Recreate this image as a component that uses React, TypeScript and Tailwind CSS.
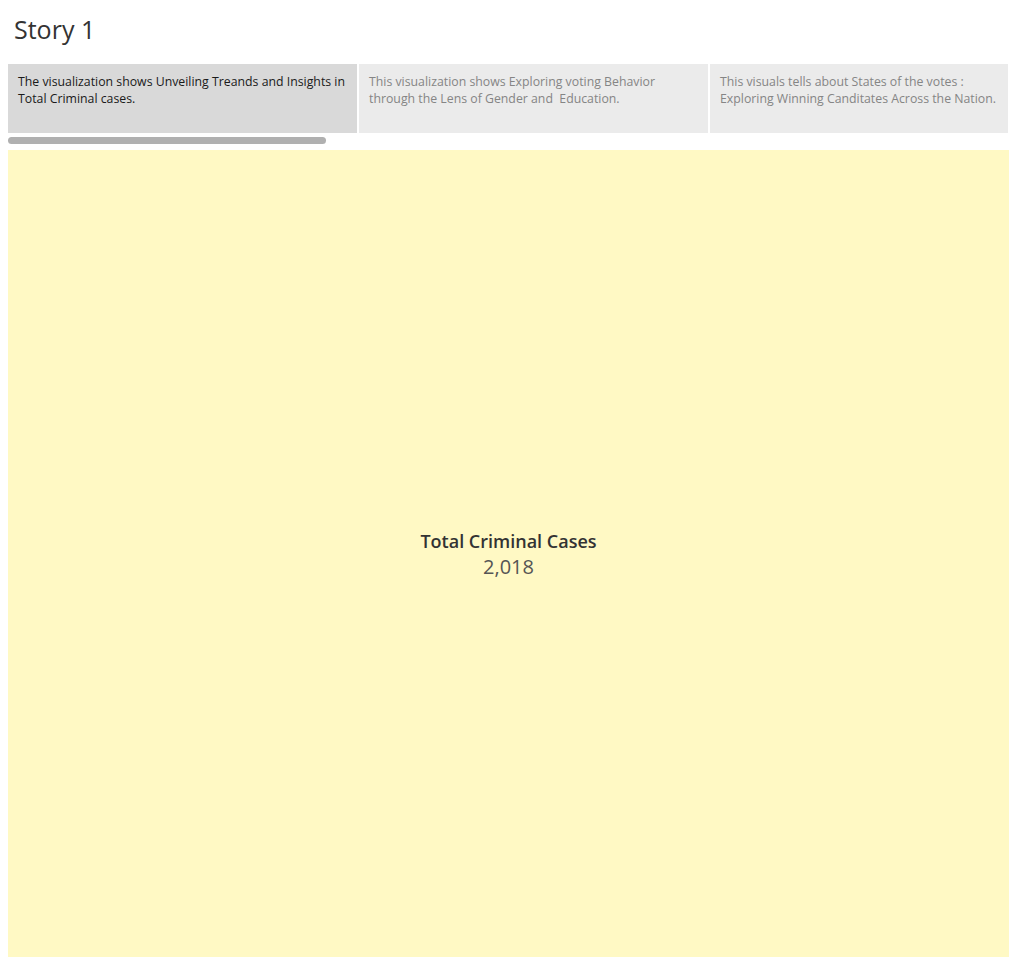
const TABS = [
  {
    text: 'The visualization shows Unveiling Treands and Insights in Total Criminal cases.',
    active: true,
  },
  {
    text: 'This visualization shows Exploring voting Behavior through the Lens of Gender and\u00a0 Education.',
    active: false,
  },
  {
    text: 'This visuals tells about States of the votes : Exploring Winning Canditates Across the Nation.',
    active: false,
  },
];

export default function App() {
  return (
    <div className="w-[1016px] h-[964px] bg-white font-['Open_Sans','Noto_Sans',sans-serif] text-[#333]">
      {/* Title */}
      <div className="h-[64px] pl-[14px] pt-[13px]">
        <h1 className="text-[25px] leading-[32px] text-[#333]">Story 1</h1>
      </div>

      {/* Story points */}
      <div className="flex gap-[2px] mx-[8px] w-[1000px] h-[69px]">
        {TABS.map((t, i) => (
          <div
            key={i}
            className={`${i === 2 ? 'w-[298px]' : 'w-[349px]'} ${
              t.active ? 'bg-[#d9d9d9] text-[#1a1a1a]' : 'bg-[#ebebeb] text-[#858585]'
            } px-[10px] pt-[9px] text-[12.3px] leading-[17px]`}
          >
            {t.text}
          </div>
        ))}
      </div>

      {/* Scrollbar */}
      <div className="mx-[8px] mt-[4px] h-[7px] w-[318px] rounded-full bg-[#b0b0b0]" />

      {/* Viz */}
      <div className="mx-[8px] mt-[6px] w-[1001px] h-[807px] bg-[#fff9c4] flex flex-col items-center justify-center">
        <div className="text-[18px] leading-[26px] font-semibold text-[#333]">Total Criminal Cases</div>
        <div className="text-[20px] leading-[26px] text-[#555]">2,018</div>
      </div>
    </div>
  );
}
